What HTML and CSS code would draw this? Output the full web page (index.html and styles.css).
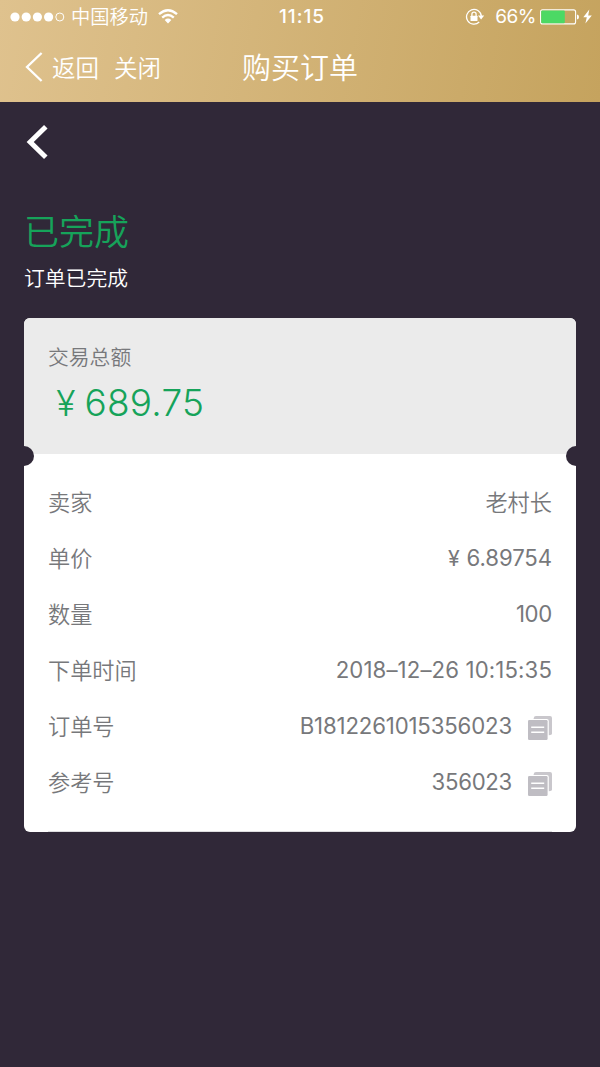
FILE: index.html
```html
<!DOCTYPE html>
<html lang="zh-CN">
<head>
<meta charset="utf-8">
<title>购买订单</title>
<link rel="stylesheet" href="styles.css">
</head>
<body>
<header class="top">
  <div class="status">
    <div class="status-left">
      <svg class="signal" width="55" height="12" viewBox="0 0 55 12" fill="#fff"><circle cx="5" cy="6" r="4.6"/><circle cx="16.2" cy="6" r="4.6"/><circle cx="27.4" cy="6" r="4.6"/><circle cx="38.6" cy="6" r="4.6"/><circle cx="49.8" cy="6" r="4" fill="none" stroke="#fff"/></svg>
      <span class="carrier">中国移动</span>
      <svg class="wifi" width="20" height="15" viewBox="0 0 20 15" fill="none" stroke="#fff" stroke-width="2.4"><path d="M1 5.2Q10-2.6 19 5.2M4.2 8.6Q10 3.6 15.8 8.6"/><path d="M6.7 11Q10 8.1 13.3 11L10 14.4Z" fill="#fff" stroke="none"/></svg>
    </div>
    <span class="clock">11:15</span>
    <div class="status-right">
      <svg class="lock" width="20" height="18" viewBox="0 0 20 18" fill="none" stroke="#fff"><path d="M14.2 14A7.4 7.4 0 1 1 16.3 8" stroke-width="1.3"/><path d="M13 7.4h6.2L16.1 11.4Z" fill="#fff" stroke="none"/><rect x="5.5" y="7.7" width="7" height="5.4" rx=".6" fill="#fff" stroke="none"/><path d="M6.9 8V6.2a2.1 2.1 0 0 1 4.2 0V8" stroke-width="1.3"/></svg>
      <span class="percent">66%</span>
      <svg class="battery" width="39" height="16" viewBox="0 0 39 16"><rect x=".6" y=".9" width="35" height="14" rx="2" fill="none" stroke="#fff" stroke-width="1.1"/><rect x="1.2" y="1.6" width="23.6" height="12.6" rx="1" fill="#4cd964"/><path d="M37 5.5q2 .4 2 2.5t-2 2.5Z" fill="#fff"/></svg>
      <svg class="bolt" width="9" height="15" viewBox="0 0 9 15" fill="#fff"><path d="M6.3.4.3 8.3h3.5L2.4 14.5 8.8 6.4H5.2Z"/></svg>
    </div>
  </div>
  <nav class="nav">
    <svg class="nav-arrow" width="18" height="30" viewBox="0 0 18 30" fill="none" stroke="#fff" stroke-width="2.3"><path d="M16.6 1 2 15l14.6 14"/></svg>
    <span class="nav-back">返回</span>
    <span class="nav-close">关闭</span>
    <h1 class="nav-title">购买订单</h1>
  </nav>
</header>
<main class="page">
  <svg class="back" width="22" height="34" viewBox="0 0 22 34" fill="none" stroke="#fff" stroke-width="5"><path d="M19.8 1.8 4.2 17l15.6 15.2"/></svg>
  <h2 class="state">已完成</h2>
  <p class="state-note">订单已完成</p>
  <section class="ticket">
    <div class="total">
      <div class="total-label">交易总额</div>
      <div class="total-value"><span class="yen">¥</span>689.75</div>
    </div>
    <dl class="details">
      <div class="row"><dt>卖家</dt><dd class="seller">老村长</dd></div>
      <div class="row"><dt>单价</dt><dd class="price"><span class="yen">¥</span>6.89754</dd></div>
      <div class="row"><dt>数量</dt><dd class="count">100</dd></div>
      <div class="row"><dt>下单时间</dt><dd class="time">2018–12–26 10:15:35</dd></div>
      <div class="row"><dt>订单号</dt><dd class="order">B1812261015356023</dd>
        <svg class="copy" width="24" height="24" viewBox="0 0 24 24"><path d="M5.6 2.4Q5.9 0 8 0h14q2 0 2 2v15.5q0 1.6-3.2 1.8V5q0-2-2-2H5.6Z" fill="#c9c7cc"/><rect y="4" width="19.6" height="20" rx="1.3" fill="#bfbdc3"/><path d="M3.2 11.2h13M3.2 16.2h13" stroke="#fff" stroke-width="1.4"/></svg></div>
      <div class="row"><dt>参考号</dt><dd class="ref">356023</dd>
        <svg class="copy" width="24" height="24" viewBox="0 0 24 24"><path d="M5.6 2.4Q5.9 0 8 0h14q2 0 2 2v15.5q0 1.6-3.2 1.8V5q0-2-2-2H5.6Z" fill="#c9c7cc"/><rect y="4" width="19.6" height="20" rx="1.3" fill="#bfbdc3"/><path d="M3.2 11.2h13M3.2 16.2h13" stroke="#fff" stroke-width="1.4"/></svg></div>
    </dl>
  </section>
</main>
</body>
</html>
```
FILE: styles.css
```css
* { box-sizing: border-box; margin: 0; padding: 0; }
body {
  min-height: 1067px;
  background: #302838;
  font-family: Inter, "Noto Sans CJK SC", sans-serif;
  font-weight: 350;
  color: #77787b;
}
svg { display: block; flex: none; }
span, h1, h2, p, dt, dd, .total-label, .total-value { white-space: nowrap; }

.top {
  height: 102px;
  background: linear-gradient(100deg, #dfc28e, #c5a35e);
  color: #fff;
}
.status {
  display: grid;
  grid-template-columns: 1fr auto 1fr;
  align-items: center;
  height: 33px;
  padding: 0 8px 0 10px;
}
.status-left, .status-right { display: flex; align-items: center; }
.status-right { justify-content: flex-end; }
.carrier { margin-left: 6px; padding-top: 2px; font-size: 19.3px; line-height: 31px; }
.wifi { margin-left: 10px; }
.clock { padding-left: 2px; font-size: 19px; font-weight: 500; letter-spacing: 1px; }
.percent { margin: 0 5px 0 10px; font-size: 19px; font-weight: 400; letter-spacing: -.5px; }
.bolt { margin-left: 4px; }
.battery { margin-left: -1px; }

.nav {
  display: grid;
  grid-template-columns: 18px 62px 129px 1fr;
  align-items: center;
  height: 69px;
  padding: 0 0 1px 25px;
}
.nav-back { padding-left: 9px; font-size: 23.5px; }
.nav-close { padding-left: 9px; font-size: 23.5px; }
.nav-title { padding: 4px 0 0 8px; font-size: 29px; font-weight: 350; line-height: 60px; }

.page { padding: 23px 24px 0; }
.back { margin-left: 2px; }
.state {
  margin-top: 48px;
  font-size: 35px;
  line-height: 50px;
  font-weight: 350;
  color: #16a35a;
}
.state-note { margin-top: 7px; font-size: 20.8px; line-height: 30px; color: #fff; }

.ticket {
  margin-top: 24px;
  height: 514px;
  border-radius: 6px;
  overflow: hidden;
  background: #fff;
  position: relative;
}
.ticket::before, .ticket::after {
  content: "";
  position: absolute;
  top: 128px;
  width: 20px;
  height: 20px;
  border-radius: 50%;
  background: #302838;
}
.ticket::before { left: -10px; }
.ticket::after { right: -10px; }
.total { height: 136px; padding: 24px; background: #ebebeb; }
.total-label { padding-top: 1px; font-size: 20.8px; line-height: 30px; }
.total-value {
  margin-top: 5px;
  font-size: 37px;
  font-weight: 300;
  line-height: 50px;
  letter-spacing: .2px;
  color: #16a35a;
}
.yen { display: inline-block; width: 1em; font-size: .96em; letter-spacing: 0; text-align: center; }
.total-value .yen { margin-right: 1px; }
.details { height: 378px; padding: 20px 0 0; margin: 0 24px; border-bottom: 1px solid #dedee0; }
.row { display: flex; align-items: center; height: 56px; font-size: 22.2px; }
.row dt { flex: 1; }
.row dt, .seller { padding-bottom: 3px; }
.row dd { padding-bottom: 2px; font-weight: 400; }
.row .seller { padding-bottom: 3px; font-weight: 350; }
.price .yen { margin-right: 2px; }
.price { letter-spacing: -.1px; }
.time { letter-spacing: .12px; }
.order { letter-spacing: -.15px; }
.count { letter-spacing: -.3px; }
.ref { letter-spacing: -.3px; }
.copy { margin-left: 16px; margin-top: 3px; }
```
